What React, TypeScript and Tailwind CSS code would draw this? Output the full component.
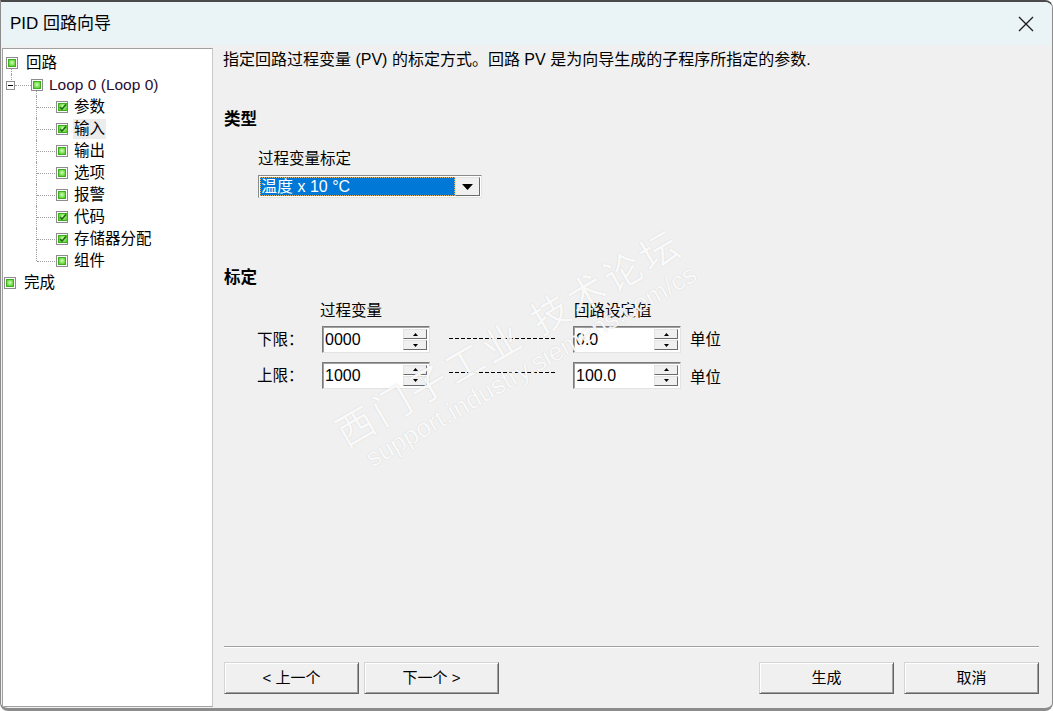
import React from 'react';

const font = "font-['Liberation_Sans','Noto_Sans_CJK_SC',sans-serif]";

function NodeIcon({ checked }: { checked?: boolean }) {
  return (
    <span className="w-[12px] h-[12px] border border-[#8c8c8c] bg-white p-[1px] flex shrink-0">
      <span className="flex-1 border border-[#3fae1f] bg-[radial-gradient(circle_at_50%_45%,#d8ffc4_0%,#8fe86a_45%,#45c020_100%)] flex items-center justify-center">
        {checked && (
          <svg width="8" height="8" viewBox="0 0 8 8">
            <path d="M1 4 L3 6 L7 1.5" stroke="#1f6b10" strokeWidth="1.6" fill="none" />
          </svg>
        )}
      </span>
    </span>
  );
}

const children = [
  { label: '参数', checked: true },
  { label: '输入', checked: true, selected: true },
  { label: '输出' },
  { label: '选项' },
  { label: '报警' },
  { label: '代码', checked: true },
  { label: '存储器分配', checked: true },
  { label: '组件' },
];

function Tree() {
  return (
    <div className="w-[211px] ml-[1px] mt-[3px] mb-[1px] bg-white border border-[#a0a0a0] border-r-[#c8c8c8] pt-[3px] text-[15.5px] leading-[20px] text-black">
      {/* root */}
      <div className="relative h-[22px] flex items-center">
        <span className="ml-[3px]"><NodeIcon /></span>
        <span className="ml-[8px]">回路</span>
        <span className="absolute left-[8px] top-[17px] bottom-0 border-l border-dotted border-[#a0a0a0]" />
      </div>
      {/* loop */}
      <div className="relative h-[22px] flex items-center">
        <span className="absolute left-[8px] top-0 h-[6px] border-l border-dotted border-[#a0a0a0]" />
        <span className="ml-[3px] w-[9px] h-[9px] border border-[#919191] bg-white flex items-center justify-center shrink-0">
          <span className="w-[5px] h-px bg-black" />
        </span>
        <span className="w-[16px] border-t border-dotted border-[#a0a0a0]" />
        <NodeIcon />
        <span className="ml-[6px] text-[#2a0c33]">Loop 0 (Loop 0)</span>
        <span className="absolute left-[33px] top-[17px] bottom-0 border-l border-dotted border-[#a0a0a0]" />
      </div>
      {children.map((c, i) => (
        <div key={c.label} className="relative h-[22px] flex items-center">
          <span
            className={
              'absolute left-[33px] top-0 border-l border-dotted border-[#a0a0a0] ' +
              (i === children.length - 1 ? 'h-[11px]' : 'bottom-0')
            }
          />
          <span className="ml-[34px] w-[18px] border-t border-dotted border-[#a0a0a0]" />
          <span className="ml-[1px]"><NodeIcon checked={c.checked} /></span>
          <span className={'ml-[5px] px-[1px] ' + (c.selected ? 'bg-[#ececec]' : '')}>{c.label}</span>
        </div>
      ))}
      <div className="relative h-[22px] flex items-center">
        <span className="ml-[1px]"><NodeIcon /></span>
        <span className="ml-[8px]">完成</span>
      </div>
    </div>
  );
}

function SpinBox({ value }: { value: string }) {
  return (
    <div className="w-[108px] h-[27px] border border-[#7a7a7a] border-b-[#e3e3e3] border-r-[#e3e3e3] shadow-[inset_1px_1px_0_#a0a0a0] bg-white flex items-center pl-[2px] pr-[2px]">
      <span className="flex-1 text-[16px] leading-none pt-[1px]">{value}</span>
      <div className="flex flex-col gap-[1px] w-[24px]">
        {['up', 'down'].map((d) => (
          <span
            key={d}
            className="h-[10px] bg-[#f0f0f0] border border-[#e3e3e3] border-b-[#6a6a6a] border-r-[#6a6a6a] flex items-center justify-center"
          >
            <svg width="5" height="3" viewBox="0 0 5 3">
              <path d={d === 'up' ? 'M2.5 0 L5 3 L0 3 Z' : 'M0 0 L5 0 L2.5 3 Z'} fill="#000" />
            </svg>
          </span>
        ))}
      </div>
    </div>
  );
}

function Dashes() {
  return <div className="w-[106px] h-px bg-[repeating-linear-gradient(90deg,#000_0_4px,transparent_4px_6px)]" />;
}

function Btn({ label }: { label: string }) {
  return (
    <button className="w-[135px] h-[32px] bg-[#f0f0f0] border border-[#d4d4d4] border-b-[#646464] border-r-[#646464] shadow-[inset_1px_1px_0_#fff,inset_-1px_-1px_0_#a0a0a0] text-[15px] text-black">
      {label}
    </button>
  );
}

export default function App() {
  return (
    <div className={`${font} w-[1053px] h-[711px] bg-[#f0f0f0] flex flex-col border-t-2 border-x border-b-[3px] border-[#8c8c8c] border-t-[#4a4a4a] rounded-tr-[8px] rounded-b-[8px] overflow-hidden text-black`}>
      {/* title bar */}
      <div className="h-[43px] shrink-0 bg-[#eaf3f6] flex items-center justify-between pl-[9px] pr-[18px]">
        <span className="text-[17px]">PID 回路向导</span>
        <svg width="16" height="16" viewBox="0 0 16 16">
          <path d="M1 1 L15 15 M15 1 L1 15" stroke="#1a1a1a" strokeWidth="1.3" />
        </svg>
      </div>

      <div className="flex-1 flex min-h-0">
        <Tree />

        <div className="relative flex-1 flex flex-col pl-[10px] pr-[13px]">
          <p className="mt-[5px] text-[16px] leading-[20px]">
            指定回路过程变量 (PV) 的标定方式。回路 PV 是为向导生成的子程序所指定的参数.
          </p>

          <h3 className="mt-[39px] text-[16.5px] leading-[20px] font-bold ml-px">类型</h3>
          <div className="ml-[35px] mt-[20px] text-[15.5px] leading-[20px]">过程变量标定</div>
          <div className="ml-[35px] mt-[6px] w-[224px] h-[23px] border border-[#8a8a8a] border-b-[#e3e3e3] border-r-[#e3e3e3] bg-white flex p-[1px]">
            <div className="flex-1 bg-[#0078d7] outline-1 outline-dotted outline-[#d8b26a] -outline-offset-1 text-white text-[16px] leading-[19px] pl-[1px]">
              温度 x 10 °C
            </div>
            <div className="w-[25px] bg-[#f0f0f0] border border-[#e3e3e3] border-b-[#6a6a6a] border-r-[#6a6a6a] flex items-center justify-center">
              <svg width="11" height="6" viewBox="0 0 11 6">
                <path d="M0 0 L11 0 L5.5 6 Z" fill="#000" />
              </svg>
            </div>
          </div>

          <h3 className="mt-[69px] text-[16.5px] leading-[20px] font-bold ml-px">标定</h3>

          <div className="ml-[34px] mt-[14px] text-[15.5px]">
            <div className="flex h-[20px] leading-[20px]">
              <span className="ml-[63px] w-[254px]">过程变量</span>
              <span>回路设定值</span>
            </div>
            <div className="mt-[5px] flex items-center">
              <span className="w-[65px]">下限：</span>
              <SpinBox value="0000" />
              <span className="ml-[19px] mb-[2px]"><Dashes /></span>
              <span className="ml-[18px]"><SpinBox value="0.0" /></span>
              <span className="ml-[9px]">单位</span>
            </div>
            <div className="mt-[8px] flex items-center">
              <span className="w-[65px]">上限：</span>
              <SpinBox value="1000" />
              <span className="ml-[19px] mb-[6px]"><Dashes /></span>
              <span className="ml-[18px]"><SpinBox value="100.0" /></span>
              <span className="ml-[9px] mt-[5px]">单位</span>
            </div>
          </div>

          <div className="flex-1" />
          <div className="h-[2px] border-t border-[#a0a0a0] border-b border-b-white ml-[1px]" />
          <div className="mt-[14px] mb-[14px] flex items-center ml-[1px]">
            <Btn label="< 上一个" />
            <span className="ml-[5px]"><Btn label="下一个 >" /></span>
            <div className="flex-1" />
            <Btn label="生成" />
            <span className="ml-[10px]"><Btn label="取消" /></span>
          </div>

          {/* watermark */}
          <div className="pointer-events-none absolute left-[303px] top-[305px] -translate-x-1/2 -translate-y-1/2 rotate-[-30deg] flex flex-col items-center text-white/90 [text-shadow:0_0_1px_rgba(0,0,0,0.2)] whitespace-nowrap">
            <span className="text-[38px] leading-[42px] tracking-[4px]">西门子工业 技术论坛</span>
            <span className="text-[26px] leading-[26px] ml-[10px]">support.industry.siemens.com/cs</span>
          </div>
        </div>
      </div>
    </div>
  );
}
